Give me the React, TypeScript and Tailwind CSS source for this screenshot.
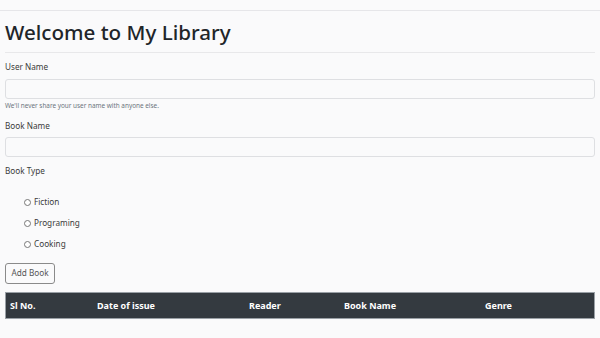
import React from "react";

export default function App() {
  const font = { fontFamily: '"Noto Sans", "Open Sans", sans-serif' };
  return (
    <div className="w-[600px] h-[338px] overflow-hidden bg-[#fafafb] text-[#212529]" style={font}>
      <div className="pt-[10px]">
        <div className="h-px bg-[#e6e6e9]" />
      </div>
      <div className="px-[5px]">
        <h1 className="text-[20.6px] leading-[26px] font-medium mt-[8px] mb-[7px] text-[#212529]">Welcome to My Library</h1>
        <div className="h-px bg-[#e8e8ea]" />
        <div className="mt-[8px] text-[8.2px] leading-[12px] text-[#3a3a3a]">User Name</div>
        <div className="mt-[6px] h-[20px] border border-[#dedfe2] rounded-[3px] bg-[#fafafb]" />
        <div className="mt-[2px] text-[6.4px] leading-[10px] text-[#6c757d]">We'll never share your user name with anyone else.</div>
        <div className="mt-[9px] text-[8.2px] leading-[12px] text-[#3a3a3a]">Book Name</div>
        <div className="mt-[5px] h-[20px] border border-[#dedfe2] rounded-[3px] bg-[#fafafb]" />
        <div className="mt-[8px] text-[8.2px] leading-[12px] text-[#3a3a3a]">Book Type</div>
        <div className="mt-[19px] pl-[19px] flex flex-col gap-[9px]">
          {["Fiction", "Programing", "Cooking"].map((t) => (
            <div key={t} className="flex items-center gap-[3px] h-[12px]">
              <span className="w-[7px] h-[7px] rounded-full border border-[#777] bg-white" />
              <span className="text-[8.2px] leading-[12px] text-[#3a3a3a]">{t}</span>
            </div>
          ))}
        </div>
        <div className="mt-[13px] flex">
          <div className="flex items-center justify-center w-[50px] h-[21px] border border-[#8a8a8a] rounded-[3px] text-[8.2px] text-[#555]">Add Book</div>
        </div>
        <div className="mt-[8px] h-[27px] bg-[#343a40] border border-[#9aa0a6] flex items-center text-white text-[9px] font-bold">
          <div className="w-[91px] pl-[4px]">Sl No.</div>
          <div className="w-[152px]">Date of issue</div>
          <div className="w-[95px]">Reader</div>
          <div className="w-[141px]">Book Name</div>
          <div>Genre</div>
        </div>
      </div>
    </div>
  );
}
